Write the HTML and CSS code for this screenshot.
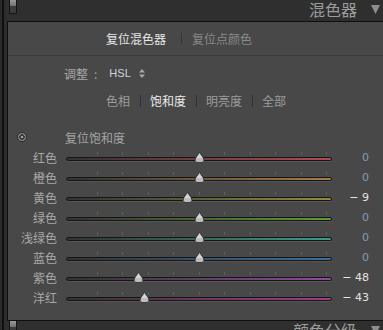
FILE: index.html
```html
<!DOCTYPE html>
<html lang="zh">
<head>
<meta charset="utf-8">
<title>混色器</title>
<link rel="stylesheet" href="styles.css">
</head>
<body>
<div class="app">
  <div class="gutter"></div>
  <div class="main">
    <header class="bar">
      <span class="knob"></span>
      <span class="bar-title">混色器</span>
      <svg class="caret" width="9" height="9" viewBox="0 0 9 9"><path d="M0 0 H9 L4.5 9 Z" fill="#8e8e8e"/></svg>
    </header>
    <section class="panel">
      <div class="actions">
        <span class="act on">复位混色器</span><span class="sep-a"></span><span class="act">复位点颜色</span>
      </div>
      <div class="adjust">
        <span class="adj-label">调整</span><span class="colon">:</span><span class="hsl">HSL</span>
        <svg class="updown" width="6" height="9" viewBox="0 0 6 9"><path d="M3 0 L6 3.5 H0 Z M0 5.5 H6 L3 9 Z" fill="#a8a8a8"/></svg>
      </div>
      <div class="tabs">
        <span class="tab">色相</span><span class="sep-t"></span><span class="tab on">饱和度</span><span class="sep-t"></span><span class="tab">明亮度</span><span class="sep-t"></span><span class="tab">全部</span>
      </div>
      <div class="reset">
        <span class="target"></span><span class="reset-label">复位饱和度</span>
      </div>
      <div class="rows">
        <div class="row red"><span class="label">红色</span><div class="slider"><div class="track"></div><svg class="thumb" style="left:127.5px" width="11" height="11" viewBox="0 0 10 10"><path d="M5 0.3 L8.6 5.4 Q10 8.2 7.4 9.6 H2.6 Q0 8.2 1.4 5.4 Z" fill="#bdbdbd" stroke="#2c2c2c" stroke-width="0.8"/><path d="M5 1.5 L7.6 5.4 H2.4 Z" fill="#d6d6d6"/></svg></div><span class="value">0</span></div>
        <div class="row orange"><span class="label">橙色</span><div class="slider"><div class="track"></div><svg class="thumb" style="left:127.5px" width="11" height="11" viewBox="0 0 10 10"><path d="M5 0.3 L8.6 5.4 Q10 8.2 7.4 9.6 H2.6 Q0 8.2 1.4 5.4 Z" fill="#bdbdbd" stroke="#2c2c2c" stroke-width="0.8"/><path d="M5 1.5 L7.6 5.4 H2.4 Z" fill="#d6d6d6"/></svg></div><span class="value">0</span></div>
        <div class="row yellow"><span class="label">黄色</span><div class="slider"><div class="track"></div><svg class="thumb" style="left:116.1px" width="11" height="11" viewBox="0 0 10 10"><path d="M5 0.3 L8.6 5.4 Q10 8.2 7.4 9.6 H2.6 Q0 8.2 1.4 5.4 Z" fill="#bdbdbd" stroke="#2c2c2c" stroke-width="0.8"/><path d="M5 1.5 L7.6 5.4 H2.4 Z" fill="#d6d6d6"/></svg></div><span class="value set">− 9</span></div>
        <div class="row green"><span class="label">绿色</span><div class="slider"><div class="track"></div><svg class="thumb" style="left:127.5px" width="11" height="11" viewBox="0 0 10 10"><path d="M5 0.3 L8.6 5.4 Q10 8.2 7.4 9.6 H2.6 Q0 8.2 1.4 5.4 Z" fill="#bdbdbd" stroke="#2c2c2c" stroke-width="0.8"/><path d="M5 1.5 L7.6 5.4 H2.4 Z" fill="#d6d6d6"/></svg></div><span class="value">0</span></div>
        <div class="row aqua"><span class="label">浅绿色</span><div class="slider"><div class="track"></div><svg class="thumb" style="left:127.5px" width="11" height="11" viewBox="0 0 10 10"><path d="M5 0.3 L8.6 5.4 Q10 8.2 7.4 9.6 H2.6 Q0 8.2 1.4 5.4 Z" fill="#bdbdbd" stroke="#2c2c2c" stroke-width="0.8"/><path d="M5 1.5 L7.6 5.4 H2.4 Z" fill="#d6d6d6"/></svg></div><span class="value">0</span></div>
        <div class="row blue"><span class="label">蓝色</span><div class="slider"><div class="track"></div><svg class="thumb" style="left:127.5px" width="11" height="11" viewBox="0 0 10 10"><path d="M5 0.3 L8.6 5.4 Q10 8.2 7.4 9.6 H2.6 Q0 8.2 1.4 5.4 Z" fill="#bdbdbd" stroke="#2c2c2c" stroke-width="0.8"/><path d="M5 1.5 L7.6 5.4 H2.4 Z" fill="#d6d6d6"/></svg></div><span class="value">0</span></div>
        <div class="row purple"><span class="label">紫色</span><div class="slider"><div class="track"></div><svg class="thumb" style="left:66.5px" width="11" height="11" viewBox="0 0 10 10"><path d="M5 0.3 L8.6 5.4 Q10 8.2 7.4 9.6 H2.6 Q0 8.2 1.4 5.4 Z" fill="#bdbdbd" stroke="#2c2c2c" stroke-width="0.8"/><path d="M5 1.5 L7.6 5.4 H2.4 Z" fill="#d6d6d6"/></svg></div><span class="value set">− 48</span></div>
        <div class="row magenta"><span class="label">洋红</span><div class="slider"><div class="track"></div><svg class="thumb" style="left:72.9px" width="11" height="11" viewBox="0 0 10 10"><path d="M5 0.3 L8.6 5.4 Q10 8.2 7.4 9.6 H2.6 Q0 8.2 1.4 5.4 Z" fill="#bdbdbd" stroke="#2c2c2c" stroke-width="0.8"/><path d="M5 1.5 L7.6 5.4 H2.4 Z" fill="#d6d6d6"/></svg></div><span class="value set">− 43</span></div>
      </div>
    </section>
    <footer class="bar">
      <span class="knob"></span>
      <span class="bar-title">颜色分级</span>
      <svg class="caret" width="9" height="9" viewBox="0 0 9 9"><path d="M0 0 H9 L4.5 9 Z" fill="#8e8e8e"/></svg>
    </footer>
  </div>
</div>
</body>
</html>
```
FILE: styles.css
```css
* { box-sizing: border-box; }
html, body { margin: 0; padding: 0; background: #2e2e2e; }
body {
  font-family: "Noto Sans CJK SC", "Noto Sans", sans-serif;
  font-size: 12px;
}
.app {
  display: flex;
  width: 383px;
  height: 330px;
  overflow: hidden;
}
.gutter {
  flex: 0 0 7px;
  background: linear-gradient(to right, #2a2a2a 0 2px, #101010 2px 4px, #2d2d2d 4px 7px);
}
.main {
  flex: 1;
  display: flex;
  flex-direction: column;
  min-width: 0;
}
.bar {
  flex: 0 0 21px;
  height: 21px;
  display: flex;
  align-items: center;
  padding-left: 2px;
  background: #2f2f2f;
}
.knob {
  align-self: flex-start;
  width: 8px;
  height: 14px;
  border: 1px solid #141414;
  border-top: 0;
  background: linear-gradient(#9a9a9a 0, #707070 6px, #3c3c3c 6px, #3c3c3c 100%);
}
.bar-title {
  margin-left: auto;
  font-size: 16px;
  line-height: 19px;
  color: #9c9c9c;
  align-self: flex-start;
}
.caret {
  margin-left: 14px;
  margin-right: 3px;
  margin-top: -3px;
}
.panel {
  flex: 0 0 300px;
  height: 300px;
  background: #484848;
  border-top: 1px solid #0f0f0f;
  border-left: 1px solid #0f0f0f;
  border-bottom: 1px solid #0f0f0f;
  display: flex;
  flex-direction: column;
}
.actions {
  height: 34px;
  display: flex;
  align-items: center;
  padding-left: 98px;
  border-bottom: 1px solid #3a3a3a;
}
.act { color: #8a8a8a; line-height: 1; }
.act.on { color: #e8e8e8; }
.sep-a {
  width: 1px;
  height: 11px;
  background: #343434;
  margin: 0 10px 0 15px;
}
.adjust {
  height: 34px;
  display: flex;
  align-items: center;
  padding-left: 56px;
}
.adj-label { color: #a8a8a8; }
.colon { color: #a0a0a0; margin-left: 6px; }
.hsl {
  margin-left: 12px;
  font-family: "Liberation Sans", Arial, sans-serif;
  font-size: 11px;
  color: #cfd6de;
}
.updown { margin-left: 8px; }
.tabs {
  height: 22px;
  display: flex;
  align-items: center;
  padding-left: 98px;
}
.tab { color: #9c9c9c; line-height: 1; }
.tab.on { color: #ececec; }
.sep-t {
  width: 1px;
  height: 12px;
  background: #303030;
  margin: 0 9px 0 10px;
}
.reset {
  margin-top: 15px;
  height: 20px;
  display: flex;
  align-items: center;
  padding-left: 9px;
}
.target {
  width: 10px;
  height: 10px;
  border-radius: 50%;
  border: 1px solid #2a2a2a;
  background: radial-gradient(circle, #a0a0a0 0 1.3px, #3a3a3a 1.6px 2.6px, #8a8a8a 3px);
}
.reset-label { margin-left: 38px; color: #a4a4a4; }
.rows { display: flex; flex-direction: column; }
.row {
  height: 20px;
  display: flex;
  align-items: center;
}
.label {
  width: 49px;
  text-align: right;
  color: #a8a8a8;
}
.slider {
  position: relative;
  flex: 0 0 266px;
  margin-left: 9px;
  height: 20px;
  display: flex;
  align-items: center;
}
.slider::before {
  content: "";
  position: absolute;
  left: 31px;
  top: 5px;
  width: 231px;
  height: 3px;
  background: repeating-linear-gradient(to right, #5f5f5f 0 1px, transparent 1px 25.44px);
}
.track {
  width: 100%;
  height: 4px;
  margin-top: 3px;
  border: 1px solid #161616;
  border-radius: 2px;
  background: linear-gradient(to right, #333 0%, var(--c) 100%);
  box-shadow: 0 1px 0 #555;
}
.thumb {
  position: absolute;
  top: 5px;
}
.value {
  width: 37px;
  text-align: right;
  font-family: "DejaVu Sans", sans-serif;
  font-size: 11px;
  color: #8a9aab;
}
.value.set { color: #e4e4e4; }
.red { --c: #b24a52; }
.orange { --c: #a97c48; }
.yellow { --c: #8e8c44; }
.green { --c: #5e9c38; }
.aqua { --c: #3c9c86; }
.blue { --c: #3c709c; }
.purple { --c: #8e4c98; }
.magenta { --c: #a43c88; }
```
